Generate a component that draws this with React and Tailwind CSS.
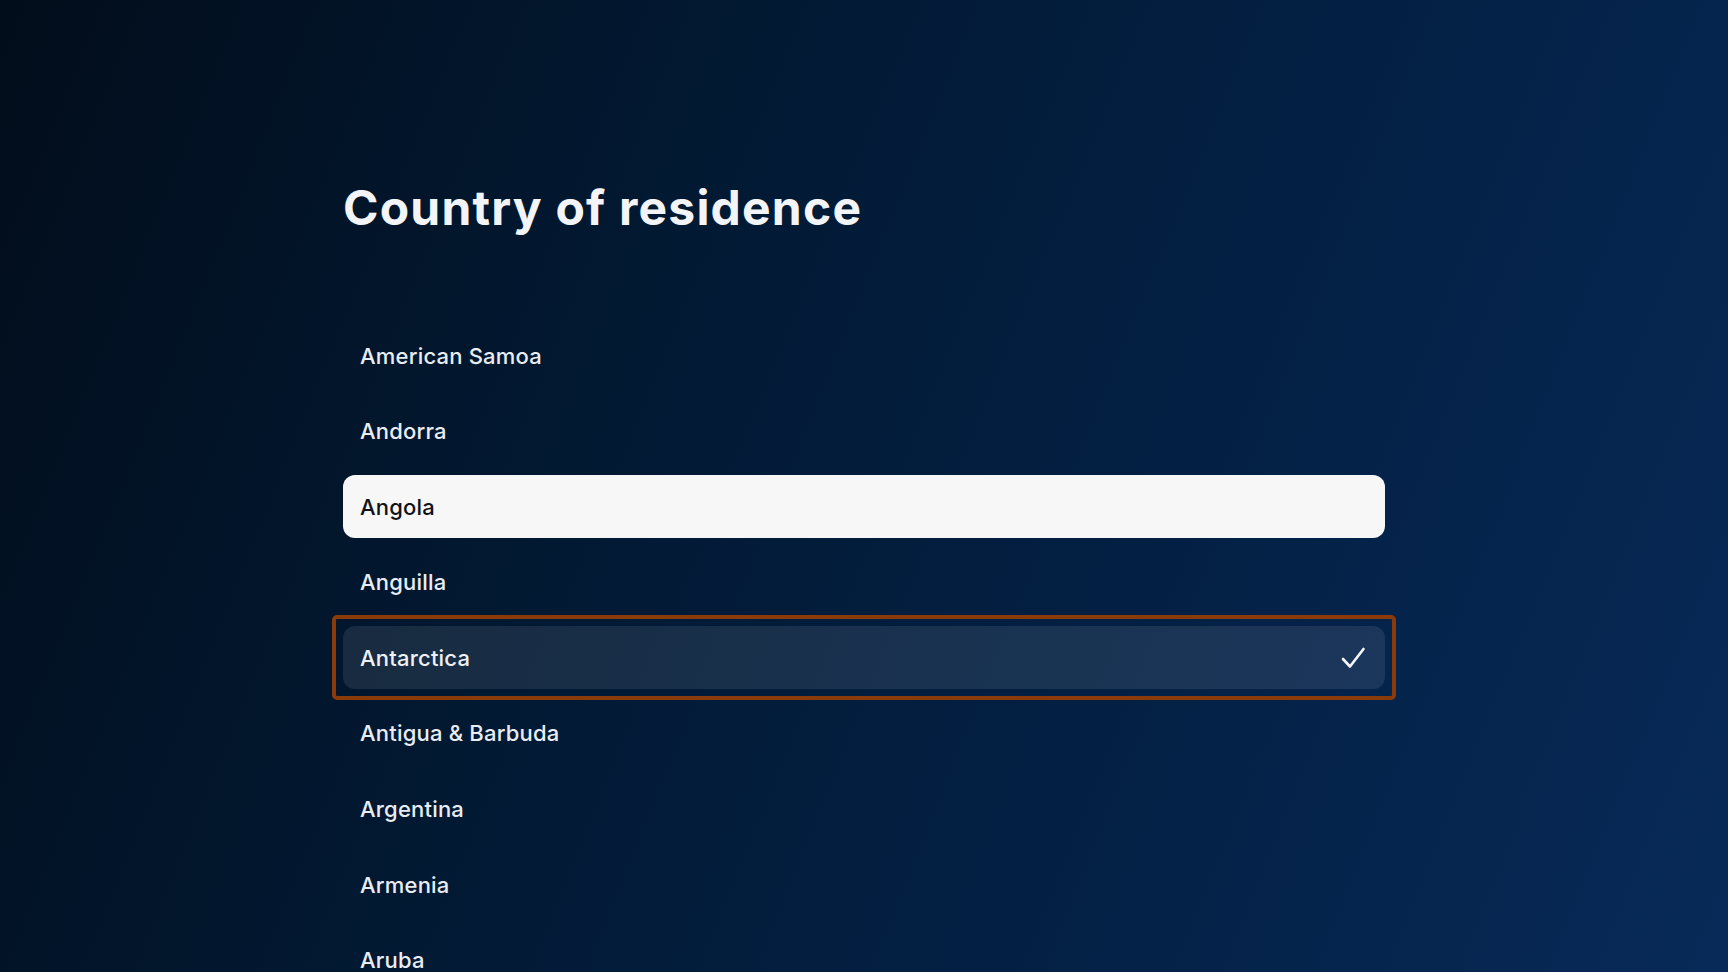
import React from 'react';

const COUNTRIES = [
  'American Samoa',
  'Andorra',
  'Angola',
  'Anguilla',
  'Antarctica',
  'Antigua & Barbuda',
  'Argentina',
  'Armenia',
  'Aruba',
];

const HOVERED = 'Angola';
const SELECTED = 'Antarctica';

function Check() {
  return (
    <svg width="26" height="24" viewBox="0 0 26 24" fill="none" className="shrink-0">
      <path d="M3 13 L10 20.5 L23.5 3" stroke="#f4f6fa" strokeWidth="2.6" strokeLinecap="round" strokeLinejoin="round" />
    </svg>
  );
}

function Row({ name }) {
  const hovered = name === HOVERED;
  const selected = name === SELECTED;

  const row = (
    <div
      className={`h-[63px] flex items-center justify-between pl-[17px] pr-[19px] rounded-[12px] text-[22px] font-medium leading-none tracking-[0.2px] ${
        hovered ? 'bg-[#f7f7f8] text-[#111318]' : selected ? 'bg-white/[0.09] text-[#eef1f6]' : 'text-[#e9edf3]'
      }`}
    >
      <span>{name}</span>
      {selected && <Check />}
    </div>
  );

  if (selected) {
    return (
      <div className="-m-[11px] p-[7px] border-[4px] border-[#8b3a0a] rounded-[5px]">
        {row}
      </div>
    );
  }
  return row;
}

export default function App() {
  return (
    <div
      className="h-screen w-full overflow-hidden bg-[linear-gradient(112deg,#020d1b_0%,#021830_32%,#031f42_62%,#082a58_100%)]"
      style={{ fontFamily: 'Inter, "Noto Sans", sans-serif' }}
    >
      <div className="pl-[343px] pr-[343px] pt-[184px]">
        <h1 className="text-[48px] font-bold leading-none text-[#f3f4f7] tracking-[1.2px]">
          Country of residence
        </h1>
        <div className="mt-[92px] flex flex-col gap-[12.6px]">
          {COUNTRIES.map((c) => (
            <Row key={c} name={c} />
          ))}
        </div>
      </div>
    </div>
  );
}
